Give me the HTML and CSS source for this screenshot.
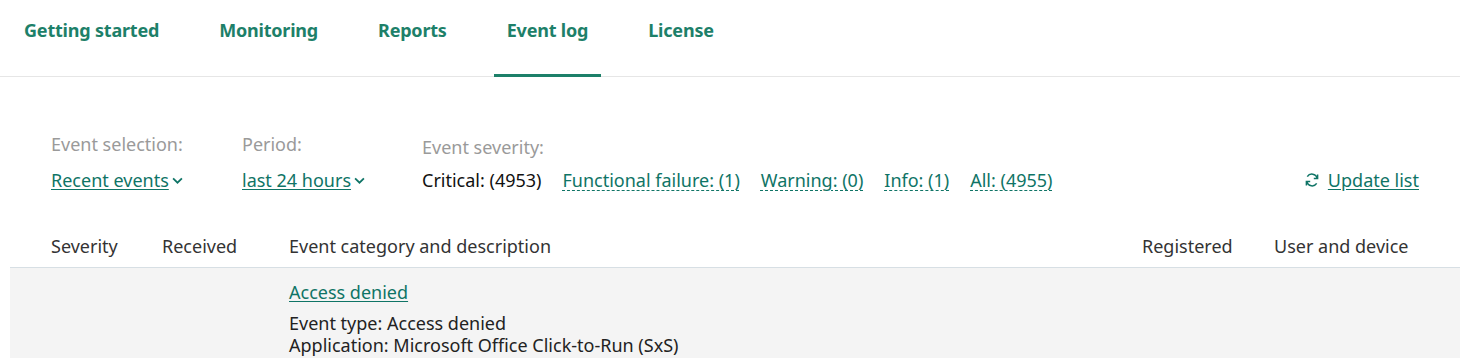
FILE: index.html
```html
<!DOCTYPE html>
<html lang="en">
<head>
    <meta charset="UTF-8">
    <meta name="viewport" content="width=device-width, initial-scale=1.0">
    <title>Event log</title>
    <link rel="stylesheet" href="styles.css">
</head>
<body>
    <nav class="tabs">
        <div class="tab">Getting started</div>
        <div class="tab">Monitoring</div>
        <div class="tab">Reports</div>
        <div class="tab active">Event log</div>
        <div class="tab">License</div>
    </nav>

    <div class="filters">
        <div class="filter filter-selection">
            <div class="filter-label">Event selection:</div>
            <a class="dropdown">Recent events<svg class="chevron" viewBox="0 0 10 6"><path d="M1 1l4 4 4-4"/></svg></a>
        </div>
        <div class="filter filter-period">
            <div class="filter-label">Period:</div>
            <a class="dropdown">last 24 hours<svg class="chevron" viewBox="0 0 10 6"><path d="M1 1l4 4 4-4"/></svg></a>
        </div>
        <div class="filter filter-severity">
            <div class="filter-label severity-label">Event severity:</div>
            <div class="severity-list">
                <span class="severity current">Critical: (4953)</span>
                <a class="severity">Functional failure: (1)</a>
                <a class="severity">Warning: (0)</a>
                <a class="severity">Info: (1)</a>
                <a class="severity">All: (4955)</a>
            </div>
        </div>
        <a class="update">
            <svg class="refresh" viewBox="0 0 16 16"><path d="M13.2 6.2A5.5 5.5 0 0 0 3.3 4.6"/><path d="M2.8 9.8a5.5 5.5 0 0 0 9.9 1.6"/><path d="M13.6 2.6v3.8H9.8"/><path d="M2.4 13.4V9.6h3.8"/></svg>
            <span>Update list</span>
        </a>
    </div>

    <div class="table">
        <div class="row head">
            <div class="col col-severity">Severity</div>
            <div class="col col-received">Received</div>
            <div class="col col-desc">Event category and description</div>
            <div class="col col-registered">Registered</div>
            <div class="col col-user">User and device</div>
        </div>
        <div class="row event">
            <div class="col col-severity"></div>
            <div class="col col-received"></div>
            <div class="col col-desc">
                <a class="event-title">Access denied</a>
                <div class="event-details">
                    Event type: Access denied<br>
                    Application: Microsoft Office Click-to-Run (SxS)
                </div>
            </div>
            <div class="col col-registered"></div>
            <div class="col col-user"></div>
        </div>
    </div>
</body>
</html>
```

FILE: styles.css
```css
body {
    font-family: "Noto Sans", Arial, sans-serif;
    font-size: 18px;
    color: #222;
    background-color: #fff;
    margin: 0;
    overflow: hidden;
}

a {
    color: #0f7466;
    cursor: pointer;
}

/* Top tabs */
.tabs {
    display: flex;
    gap: 34px;
    padding-left: 11px;
    border-bottom: 1px solid #e6e6e6;
    height: 76px;
}

.tab {
    padding: 0 13px;
    font-size: 18px;
    font-weight: bold;
    color: #1d8069;
    line-height: 60px;
    border-bottom: 3px solid transparent;
    margin-bottom: -1px;
    letter-spacing: -0.2px;
}

.tab.active {
    border-bottom-color: #1d8069;
    height: 74px;
}

/* Filters */
.filters {
    display: flex;
    align-items: flex-end;
    padding: 55px 41px 0 51px;
    line-height: 24px;
}

.filter {
    display: flex;
    flex-direction: column;
}

.filter-selection {
    width: 191px;
}

.filter-period {
    width: 180px;
}

.filter-label {
    color: #9a9a9a;
    margin-bottom: 12px;
}

.severity-label {
    margin-bottom: 9px;
}

.dropdown {
    display: flex;
    align-items: center;
    text-decoration: underline;
    text-underline-offset: 2px;
    color: #0f7466;
}

.chevron {
    width: 11px;
    height: 7px;
    margin-left: 3px;
    fill: none;
    stroke: #0f7466;
    stroke-width: 1.6;
}

.severity-list {
    display: flex;
    gap: 21px;
}

.severity {
    text-decoration: underline dashed;
    text-decoration-thickness: 1px;
    text-underline-offset: 3px;
    color: #0f7466;
}

.severity.current {
    color: #111;
    text-decoration: none;
}

.update {
    margin-left: auto;
    display: flex;
    align-items: center;
    gap: 8px;
    text-decoration: underline;
    text-underline-offset: 2px;
}

.refresh {
    width: 16px;
    height: 16px;
    fill: none;
    stroke: #0f7466;
    stroke-width: 1.5;
}

/* Table */
.table {
    margin: 33px 0 0 10px;
}

.row {
    display: flex;
}

.row.head {
    border-bottom: 1px solid #d7dfe4;
    height: 42px;
    align-items: center;
    color: #333;
}

.row.event {
    background-color: #f4f4f4;
    padding-top: 12px;
    height: 90px;
}

.col-severity {
    width: 111px;
    padding-left: 41px;
}

.col-received {
    width: 127px;
}

.col-desc {
    flex: 1;
}

.col-registered {
    width: 132px;
}

.col-user {
    width: 186px;
}

.event-title {
    text-decoration: underline;
    text-underline-offset: 2px;
}

.event-details {
    margin-top: 8px;
    line-height: 22px;
}
```
